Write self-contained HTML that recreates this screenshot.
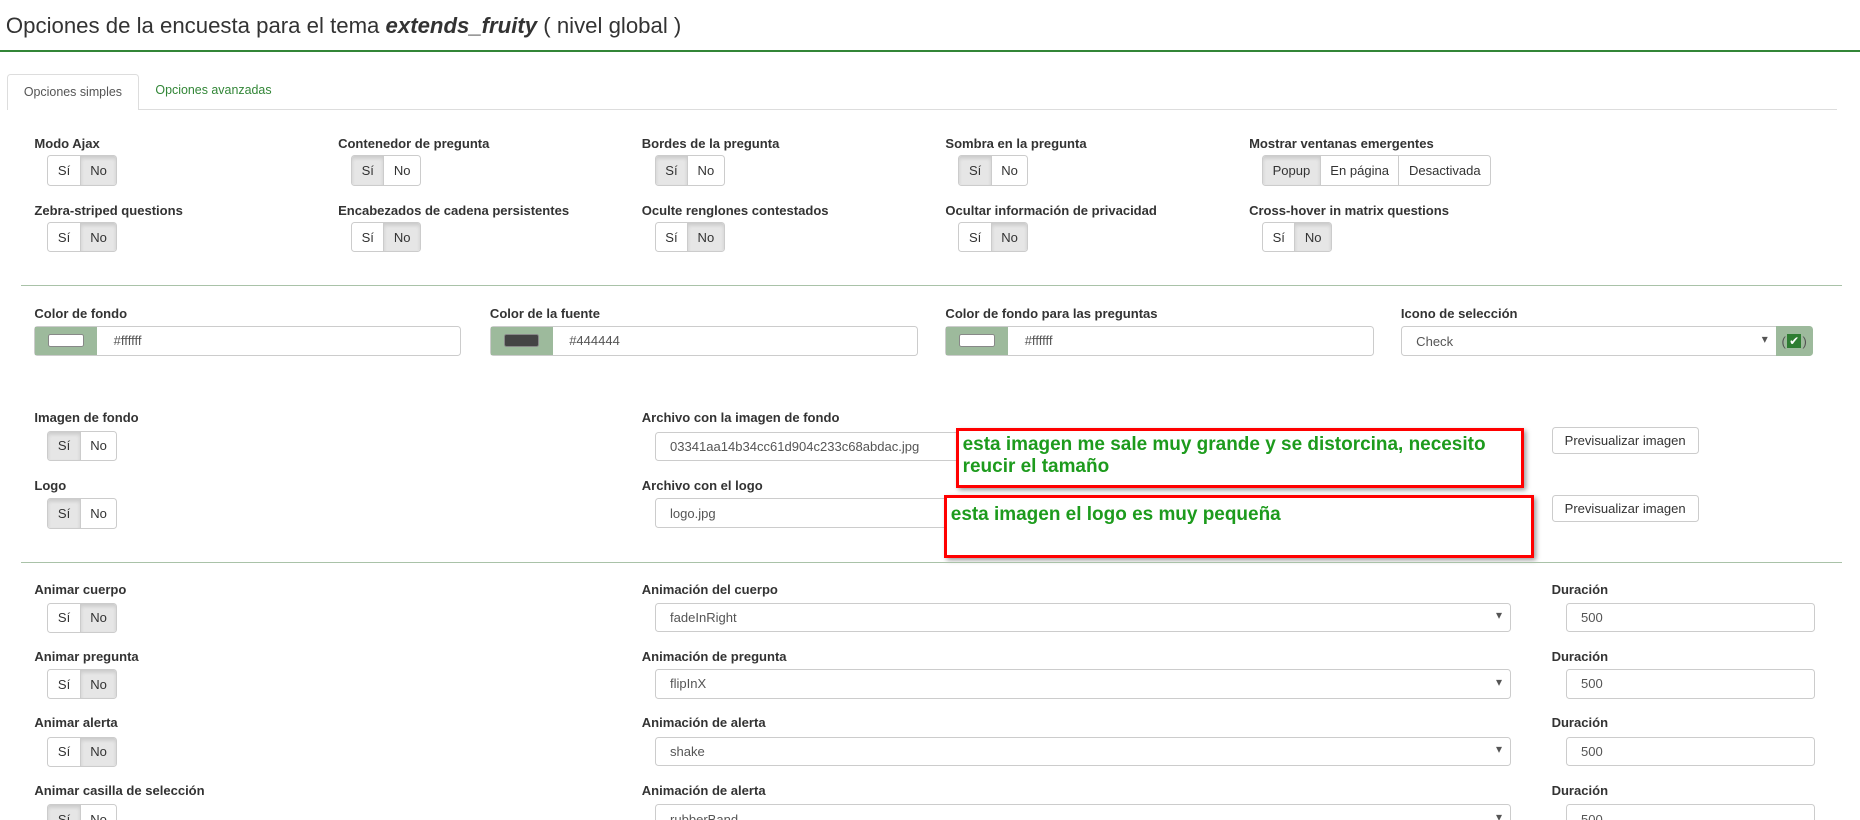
<!DOCTYPE html>
<html><head><meta charset="utf-8"><style>
html,body{margin:0;padding:0;background:#fff;overflow:hidden}
#w{position:relative;width:1568px;height:691px;zoom:1.18622;font-family:"Liberation Sans",sans-serif;color:#333}
.a{position:absolute}
.lb{position:absolute;font-weight:bold;font-size:11px;color:#333;white-space:nowrap}
.tg{position:absolute;display:flex;height:24px;border:1px solid #ccc;border-radius:3px;overflow:hidden;font-size:11px;background:#fff}
.tg span{display:flex;align-items:center;padding:0 8px;color:#333}
.tg span+span{border-left:1px solid #ccc}
.tg .on{background:#e6e6e6;box-shadow:inset 0 2px 3px rgba(0,0,0,.12)}
.in{position:absolute;height:23px;border:1px solid #ccc;border-radius:3px;background:#fff;font-size:11px;color:#555;display:flex;align-items:center;padding-left:12px;box-sizing:border-box;white-space:nowrap}
.sel::after{content:"▾";position:absolute;right:7px;top:4px;font-size:10px;color:#555}
.hr{position:absolute;height:1px;background:#a9c2a8;left:18px;width:1535px}
.btn{position:absolute;height:23px;border:1px solid #ccc;border-radius:3px;font-size:11px;color:#333;display:flex;align-items:center;justify-content:center;box-sizing:border-box;background:#fff}
.red{position:absolute;border:3px solid #f00;box-shadow:2px 2px 4px rgba(0,0,0,.4);color:#1d9b1d;font-weight:bold;font-size:16px;line-height:19px;padding:2px 3px;box-sizing:border-box;background:#fff}
.sw{position:absolute;height:25px;border:1px solid #ccc;border-radius:3px;box-sizing:border-box;background:#fff}
.sw .g{position:absolute;left:0;top:0;bottom:0;width:52px;background:#9dba9c}
.sw .g i{position:absolute;left:11px;top:6px;width:28px;height:9px;border:1px solid #888;border-radius:2px;background:#fff;box-shadow:inset 0 0 0 1px #fff}
.sw b{position:absolute;left:66px;top:5px;font-weight:normal;font-size:11px;color:#555}
</style></head><body><div id="w">
<div class="a" style="left:5px;top:11px;font-size:18.7px;color:#333">Opciones de la encuesta para el tema <b><i>extends_fruity</i></b> ( nivel global )</div>
<div class="a" style="left:0;top:42px;width:1568px;height:2px;background:#328637"></div>

<div class="a" style="left:6px;top:92px;width:1543px;height:1px;background:#ddd"></div>
<div class="a" style="left:6px;top:62px;width:111px;height:31px;border:1px solid #ddd;border-bottom:none;border-radius:3px 3px 0 0;background:#fff;box-sizing:border-box;font-size:10.5px;color:#555;display:flex;align-items:center;justify-content:center">Opciones simples</div>
<div class="a" style="left:131px;top:70px;font-size:10.5px;color:#328637">Opciones avanzadas</div>

<div class="lb" style="left:29px;top:115px">Modo Ajax</div>
<div class="tg" style="left:40px;top:131px"><span>Sí</span><span class="on">No</span></div>
<div class="lb" style="left:285px;top:115px">Contenedor de pregunta</div>
<div class="tg" style="left:296px;top:131px"><span class="on">Sí</span><span>No</span></div>
<div class="lb" style="left:541px;top:115px">Bordes de la pregunta</div>
<div class="tg" style="left:552px;top:131px"><span class="on">Sí</span><span>No</span></div>
<div class="lb" style="left:797px;top:115px">Sombra en la pregunta</div>
<div class="tg" style="left:808px;top:131px"><span class="on">Sí</span><span>No</span></div>
<div class="lb" style="left:1053px;top:115px">Mostrar ventanas emergentes</div>
<div class="tg" style="left:1064px;top:131px"><span class="on">Popup</span><span>En página</span><span>Desactivada</span></div>

<div class="lb" style="left:29px;top:171px">Zebra-striped questions</div>
<div class="tg" style="left:40px;top:187px"><span>Sí</span><span class="on">No</span></div>
<div class="lb" style="left:285px;top:171px">Encabezados de cadena persistentes</div>
<div class="tg" style="left:296px;top:187px"><span>Sí</span><span class="on">No</span></div>
<div class="lb" style="left:541px;top:171px">Oculte renglones contestados</div>
<div class="tg" style="left:552px;top:187px"><span>Sí</span><span class="on">No</span></div>
<div class="lb" style="left:797px;top:171px">Ocultar información de privacidad</div>
<div class="tg" style="left:808px;top:187px"><span>Sí</span><span class="on">No</span></div>
<div class="lb" style="left:1053px;top:171px">Cross-hover in matrix questions</div>
<div class="tg" style="left:1064px;top:187px"><span>Sí</span><span class="on">No</span></div>

<div class="hr" style="top:240px"></div>

<div class="lb" style="left:29px;top:258px">Color de fondo</div>
<div class="sw" style="left:29px;top:275px;width:360px"><div class="g"><i></i></div><b>#ffffff</b></div>
<div class="lb" style="left:413px;top:258px">Color de la fuente</div>
<div class="sw" style="left:413px;top:275px;width:361px"><div class="g"><i style="background:#444;box-shadow:none"></i></div><b>#444444</b></div>
<div class="lb" style="left:797px;top:258px">Color de fondo para las preguntas</div>
<div class="sw" style="left:797px;top:275px;width:361px"><div class="g"><i></i></div><b>#ffffff</b></div>
<div class="lb" style="left:1181px;top:258px">Icono de selección</div>
<div class="in sel" style="left:1181px;top:275px;width:317px;height:25px;border-radius:3px 0 0 3px">Check</div>
<div class="a" style="left:1497px;top:275px;width:31px;height:25px;background:#9dba9c;border-radius:0 3px 3px 0;font-size:11px;color:#555;display:flex;align-items:center;justify-content:center">(<span style="display:inline-block;width:12px;height:12px;background:#2e7d32;color:#fff;font-size:10px;line-height:12px;text-align:center;margin:0 1px">✔</span>)</div>

<div class="lb" style="left:29px;top:346px">Imagen de fondo</div>
<div class="tg" style="left:40px;top:363px"><span class="on">Sí</span><span>No</span></div>
<div class="lb" style="left:541px;top:346px">Archivo con la imagen de fondo</div>
<div class="in" style="left:552px;top:364px;width:260px;height:25px">03341aa14b34cc61d904c233c68abdac.jpg</div>
<div class="red" style="left:806px;top:361px;width:479px;height:50px">esta imagen me sale muy grande y se distorcina, necesito reucir el tamaño</div>
<div class="btn" style="left:1308px;top:360px;width:124px">Previsualizar imagen</div>

<div class="lb" style="left:29px;top:403px">Logo</div>
<div class="tg" style="left:40px;top:420px"><span class="on">Sí</span><span>No</span></div>
<div class="lb" style="left:541px;top:403px">Archivo con el logo</div>
<div class="in" style="left:552px;top:420px;width:250px;height:25px">logo.jpg</div>
<div class="red" style="left:796px;top:417px;width:497px;height:53px;padding-top:5px">esta imagen el logo es muy pequeña</div>
<div class="btn" style="left:1308px;top:417px;width:124px">Previsualizar imagen</div>

<div class="hr" style="top:474px"></div>

<div class="lb" style="left:29px;top:491px">Animar cuerpo</div>
<div class="tg" style="left:40px;top:508px"><span>Sí</span><span class="on">No</span></div>
<div class="lb" style="left:541px;top:491px">Animación del cuerpo</div>
<div class="in sel" style="left:552px;top:508px;width:722px;height:25px">fadeInRight</div>
<div class="lb" style="left:1308px;top:491px">Duración</div>
<div class="in" style="left:1320px;top:508px;width:210px;height:25px">500</div>

<div class="lb" style="left:29px;top:547px">Animar pregunta</div>
<div class="tg" style="left:40px;top:564px"><span>Sí</span><span class="on">No</span></div>
<div class="lb" style="left:541px;top:547px">Animación de pregunta</div>
<div class="in sel" style="left:552px;top:564px;width:722px;height:25px">flipInX</div>
<div class="lb" style="left:1308px;top:547px">Duración</div>
<div class="in" style="left:1320px;top:564px;width:210px;height:25px">500</div>

<div class="lb" style="left:29px;top:603px">Animar alerta</div>
<div class="tg" style="left:40px;top:621px"><span>Sí</span><span class="on">No</span></div>
<div class="lb" style="left:541px;top:603px">Animación de alerta</div>
<div class="in sel" style="left:552px;top:621px;width:722px;height:25px">shake</div>
<div class="lb" style="left:1308px;top:603px">Duración</div>
<div class="in" style="left:1320px;top:621px;width:210px;height:25px">500</div>

<div class="lb" style="left:29px;top:660px">Animar casilla de selección</div>
<div class="tg" style="left:40px;top:678px"><span class="on">Sí</span><span>No</span></div>
<div class="lb" style="left:541px;top:660px">Animación de alerta</div>
<div class="in sel" style="left:552px;top:678px;width:722px;height:25px">rubberBand</div>
<div class="lb" style="left:1308px;top:660px">Duración</div>
<div class="in" style="left:1320px;top:678px;width:210px;height:25px">500</div>
</div></body></html>
